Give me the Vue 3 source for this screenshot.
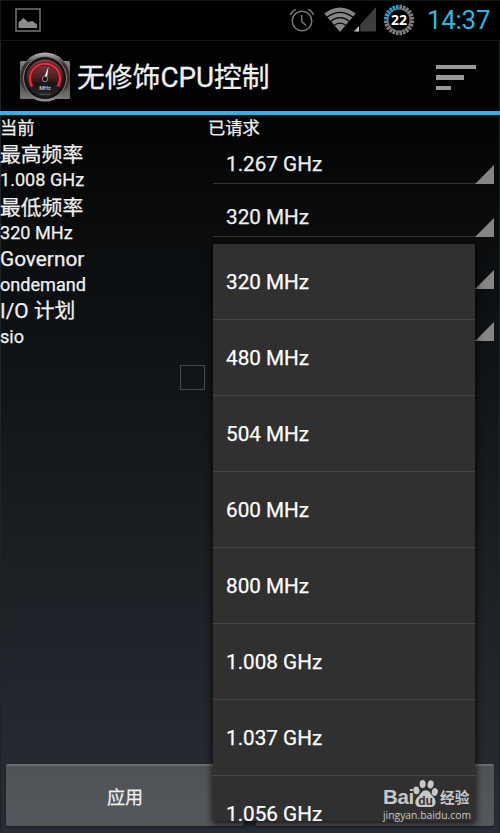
<template>
    <div class="screen">
        <div class="status-bar">
            <svg class="picture-icon" width="26" height="24" viewBox="0 0 26 24">
                <rect x="1" y="1" width="24" height="22" fill="none" stroke="#747672" stroke-width="1.5" />
                <path d="M3.5 20V14.5L8.5 10L13 14L17.5 13L22 16.5V20Z" fill="#8b8b8b" />
            </svg>
            <div class="status-icons">
                <svg class="alarm" width="26" height="26" viewBox="0 0 26 26" fill="none" stroke="#767676" stroke-width="1.5">
                    <circle cx="13" cy="14" r="9.8" />
                    <path d="M12.7 8V14.5L17 18.5" />
                    <path d="M1.3 8Q3 4 7 2.4M19 2.4Q23 4 24.7 8" />
                </svg>
                <svg class="wifi" width="32" height="26" viewBox="0 0 32 26">
                    <path d="M0.3 6.5Q16 -5.5 31.7 6.5L16 25Z" fill="#858585" />
                    <path d="M3 10.3Q16 0.5 29 10.3M6.3 14.4Q16 7 25.7 14.4M9.8 18.6Q16 13.8 22.2 18.6" fill="none" stroke="#050505" stroke-width="1.3" />
                </svg>
                <svg class="signal" width="22" height="25" viewBox="0 0 22 25">
                    <path d="M0 24.5L22 0V24.5Z" fill="#3d3d3d" />
                    <path d="M0 24.5L5 19V24.5Z" fill="#c0c0c0" />
                    <path d="M5.7 18V25" stroke="#000" stroke-width="1" />
                </svg>
                <svg class="battery" width="32" height="32" viewBox="0 0 32 32">
                    <path
                        v-for="n in 24"
                        :key="n"
                        d="M16 0.8V5.6"
                        :transform="`rotate(${n * 15 - 7.5} 16 16)`"
                        :stroke="n > 18 ? '#2c9cc8' : '#7d7d7d'"
                        stroke-width="2.7"
                    />
                    <text x="16" y="21" text-anchor="middle">22</text>
                </svg>
                <span class="clock">14:37</span>
            </div>
        </div>

        <div class="action-bar">
            <svg class="app-icon" width="52" height="52" viewBox="0 0 52 52">
                <defs>
                    <linearGradient id="plate" x1="0" y1="0" x2="0" y2="1">
                        <stop offset="0" stop-color="#858585" />
                        <stop offset="0.5" stop-color="#444" />
                        <stop offset="1" stop-color="#777" />
                    </linearGradient>
                    <linearGradient id="rim" x1="0" y1="0" x2="0" y2="1">
                        <stop offset="0" stop-color="#bbb" />
                        <stop offset="0.25" stop-color="#332d2d" />
                        <stop offset="0.7" stop-color="#373737" />
                        <stop offset="1" stop-color="#999" />
                    </linearGradient>
                    <linearGradient id="face" x1="0" y1="0" x2="0" y2="1">
                        <stop offset="0" stop-color="#7c4448" />
                        <stop offset="0.5" stop-color="#4a1e22" />
                        <stop offset="0.65" stop-color="#191516" />
                        <stop offset="1" stop-color="#28282a" />
                    </linearGradient>
                </defs>
                <rect x="1" y="10" width="50" height="38" rx="1.5" fill="url(#plate)" />
                <circle cx="26" cy="26" r="24.5" fill="url(#rim)" />
                <circle cx="26" cy="27" r="21.5" fill="#191213" stroke="#8a8080" stroke-width="1" />
                <circle cx="26" cy="27" r="18.5" fill="url(#face)" />
                <path d="M13.2 35.5A15 15 0 1 1 38.8 35.5" fill="none" stroke="#6a1820" stroke-width="4" />
                <path d="M13.2 35.5A15 15 0 1 1 38.8 35.5" fill="none" stroke="#e8303c" stroke-width="1.9" />
                <path d="M24.5 28L29.5 15.5L27.9 28Z" fill="#eee" />
                <circle cx="26" cy="28" r="2.7" fill="#171717" stroke="#999" stroke-width="0.8" />
                <text x="26" y="39" text-anchor="middle">MHz</text>
                <path d="M20.5 43.3H31.5" stroke="#4b4b4d" stroke-width="1.2" />
            </svg>
            <h1>无修饰CPU控制</h1>
            <div class="menu-icon"><i></i><i></i><i></i></div>
        </div>

        <main class="content">
            <div class="table-head">
                <span>当前</span>
                <span>已请求</span>
            </div>
            <div v-for="row in rows" :key="row.title" class="row">
                <div class="current">
                    <div class="title">{{ row.title }}</div>
                    <div class="value">{{ row.value }}</div>
                </div>
                <div class="spinner">{{ row.requested }}</div>
            </div>
            <div class="boot-row"><span class="checkbox"></span></div>
            <div class="buttons">
                <button>应用</button>
                <button></button>
            </div>
        </main>

        <ul class="dropdown">
            <li v-for="item in options" :key="item">{{ item }}</li>
        </ul>

        <div class="watermark">
            <div class="brand">
                <span class="bai">Bai</span>
                <svg width="25" height="29" viewBox="0 0 25 29">
                    <g fill="#c8c8c8">
                        <ellipse cx="3.4" cy="11.4" rx="3" ry="3.9" transform="rotate(-12 3.4 11.4)" />
                        <ellipse cx="9.6" cy="5" rx="3" ry="4.1" />
                        <ellipse cx="17.6" cy="5.4" rx="3" ry="4.1" transform="rotate(12 17.6 5.4)" />
                        <ellipse cx="21.8" cy="13" rx="3" ry="3.9" transform="rotate(15 21.8 13)" />
                        <path d="M12.8 11.3C16.5 11.3 17.5 15 20 17.5C24.3 21.5 23 28 18 28H7C1.5 28 0.8 21.5 5 17.8C8 15 9 11.3 12.8 11.3Z" />
                    </g>
                    <text x="12.5" y="25.5" text-anchor="middle">du</text>
                </svg>
                <span class="jingyan">经验</span>
            </div>
            <div class="site">jingyan.baidu.com</div>
        </div>
    </div>
</template>

<script setup>
const rows = [
    { title: '最高频率', value: '1.008 GHz', requested: '1.267 GHz' },
    { title: '最低频率', value: '320 MHz', requested: '320 MHz' },
    { title: 'Governor', value: 'ondemand', requested: '' },
    { title: 'I/O 计划', value: 'sio', requested: '' }
];
const options = [
    '320 MHz',
    '480 MHz',
    '504 MHz',
    '600 MHz',
    '800 MHz',
    '1.008 GHz',
    '1.037 GHz',
    '1.056 GHz'
];
</script>

<style>
body {
    margin: 0;
    background: #000;
}
</style>

<style scoped>
.screen {
    position: relative;
    display: flex;
    flex-direction: column;
    width: 500px;
    height: 833px;
    overflow: hidden;
    box-sizing: border-box;
    font-family: Roboto, "Noto Sans CJK SC", sans-serif;
    color: #f0f0f0;
    background: linear-gradient(#000 0, #020303 110px, #0b0d0f 250px, #121619 400px, #1b2025 570px, #23292e 740px, #282e39 833px);
    box-shadow: inset 1px 0 #202324, inset -1px 0 #202324;
}
.status-bar {
    display: flex;
    justify-content: space-between;
    height: 41px;
    box-sizing: border-box;
    padding: 8px 10px 0 15px;
    background: #000;
    border-top: 1px solid #171717;
    border-bottom: 1px solid #151515;
    box-shadow: inset 1px 0 #161616;
}
.picture-icon {
    margin-top: -1px;
}
.status-icons {
    display: flex;
    align-items: flex-start;
}
.alarm {
    margin: -2px 2px 0 -2px;
}
.wifi {
    margin: -2px 0 0 7px;
}
.signal {
    margin: -2px 0 0 -2px;
}
.battery {
    margin: -5px 1px 0 7px;
}
.battery text {
    font: 700 14px "Open Sans", sans-serif;
    fill: #fff;
}
.clock {
    width: 63px;
    margin: -3px 0 0 11px;
    font-size: 26px;
    line-height: 29px;
    letter-spacing: -0.3px;
    color: #33b5e5;
    white-space: nowrap;
}
.action-bar {
    display: flex;
    align-items: center;
    height: 74px;
    box-sizing: border-box;
    padding: 0 24px 0 19px;
    border-bottom: 4px solid #2fb4e9;
}
.app-icon {
    margin-top: 2px;
}
.app-icon text {
    font: 700 5.5px Roboto, sans-serif;
    fill: #bbb;
}
h1 {
    flex: 1;
    margin: 3px 0 0 6px;
    font-size: 27.8px;
    font-weight: 400;
    line-height: 36px;
    white-space: nowrap;
    -webkit-text-stroke: 0.3px;
}
.menu-icon {
    display: flex;
    flex-direction: column;
    gap: 6.3px;
    width: 40px;
    margin-top: 3px;
}
.menu-icon i {
    height: 4.2px;
    background: #999;
}
.menu-icon i:nth-child(2) {
    width: 28px;
}
.menu-icon i:nth-child(3) {
    width: 15px;
}
.content {
    display: flex;
    flex: 1;
    flex-direction: column;
    -webkit-text-stroke: 0.25px;
}
.table-head {
    display: flex;
    height: 26px;
    font-size: 17.3px;
    line-height: 26px;
}
.table-head span:first-child {
    width: 208px;
}
.row {
    display: flex;
    height: 52px;
}
.row:nth-child(2) {
    height: 53px;
}
.current {
    width: 213px;
}
.title {
    height: 26px;
    font-size: 20.8px;
    line-height: 28px;
}
.row:nth-child(n+4) .title {
    line-height: 27px;
}
.value {
    font-size: 18.1px;
    line-height: 26px;
}
.spinner {
    position: relative;
    width: 281px;
    height: 43px;
    box-sizing: border-box;
    padding-left: 13px;
    border-bottom: 1.5px solid #303233;
    font-size: 20.7px;
    line-height: 47px;
}
.spinner::after {
    content: "";
    position: absolute;
    right: 0;
    bottom: -1px;
    width: 19px;
    height: 19px;
    background: #858585;
    clip-path: polygon(100% 0, 100% 100%, 0 100%);
}
.boot-row {
    flex: 1;
    padding: 15px 0 0 180px;
}
.checkbox {
    display: block;
    width: 23px;
    height: 23px;
    border: 1px solid #45484a;
}
.buttons {
    display: flex;
    gap: 12px;
    padding: 0 6px 7px;
}
button {
    flex: 1;
    height: 62px;
    padding: 3px 0 0;
    border: 0;
    border-top: 2px solid #6b6e70;
    border-radius: 2px;
    background: linear-gradient(#505356, #55575c);
    box-shadow: 0 1px 2px #17191d;
    font: 18px/26px Roboto, "Noto Sans CJK SC", sans-serif;
    color: #f0f0f0;
}
.dropdown {
    position: absolute;
    left: 213px;
    top: 244px;
    width: 262px;
    height: 577px;
    margin: 0;
    padding: 0;
    overflow: hidden;
    list-style: none;
    background: #303030;
    border-radius: 1px;
    box-shadow: 0 2px 7px 1px rgba(0, 0, 0, 0.75);
}
.dropdown li {
    height: 76px;
    box-sizing: border-box;
    padding-left: 13px;
    border-bottom: 1px solid #484848;
    font-size: 20.7px;
    line-height: 76px;
    color: #fff;
    -webkit-text-stroke: 0.25px;
}
.watermark {
    position: absolute;
    left: 383px;
    top: 779px;
    color: #c8c8c8;
}
.brand {
    display: flex;
    align-items: flex-end;
    height: 29px;
}
.bai {
    width: 30px;
    font: 700 20.5px/22px "Liberation Sans", sans-serif;
    letter-spacing: -0.3px;
}
.brand svg text {
    font: 700 12px "Liberation Sans", sans-serif;
    fill: #303030;
}
.jingyan {
    margin-left: 2px;
    font: 700 14.7px/22px "Noto Sans CJK SC", sans-serif;
}
.site {
    margin-top: 1px;
    font: 10.35px/12px "Open Sans", sans-serif;
}
</style>
